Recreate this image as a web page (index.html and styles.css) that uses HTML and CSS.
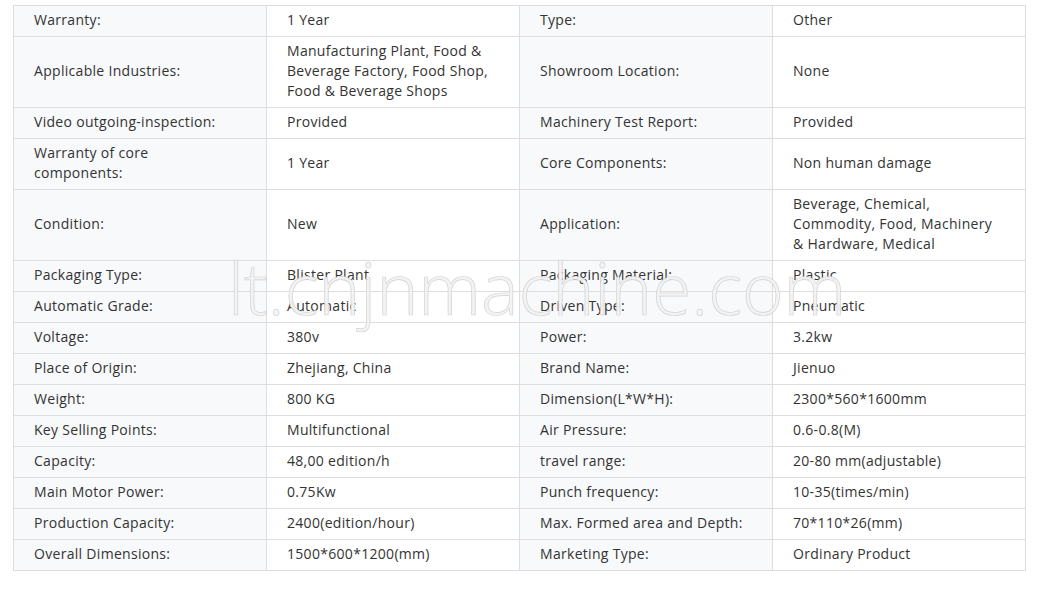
FILE: index.html
```html
<!DOCTYPE html>
<html>
<head>
<meta charset="utf-8">
<link rel="stylesheet" href="styles.css">
</head>
<body>
<div class="wrap">
<table class="spec">
<tbody>
<tr><td class="k">Warranty:</td><td class="v">1 Year</td><td class="k">Type:</td><td class="v">Other</td></tr>
<tr><td class="k">Applicable Industries:</td><td class="v">Manufacturing Plant, Food &amp; Beverage Factory, Food Shop, Food &amp; Beverage Shops</td><td class="k">Showroom Location:</td><td class="v">None</td></tr>
<tr><td class="k">Video outgoing-inspection:</td><td class="v">Provided</td><td class="k">Machinery Test Report:</td><td class="v">Provided</td></tr>
<tr><td class="k">Warranty of core<br>components:</td><td class="v">1 Year</td><td class="k">Core Components:</td><td class="v">Non human damage</td></tr>
<tr><td class="k">Condition:</td><td class="v">New</td><td class="k">Application:</td><td class="v">Beverage, Chemical, Commodity, Food, Machinery &amp; Hardware, Medical</td></tr>
<tr><td class="k">Packaging Type:</td><td class="v">Blister Plant</td><td class="k">Packaging Material:</td><td class="v">Plastic</td></tr>
<tr><td class="k">Automatic Grade:</td><td class="v">Automatic</td><td class="k">Driven Type:</td><td class="v">Pneumatic</td></tr>
<tr><td class="k">Voltage:</td><td class="v">380v</td><td class="k">Power:</td><td class="v">3.2kw</td></tr>
<tr><td class="k">Place of Origin:</td><td class="v">Zhejiang, China</td><td class="k">Brand Name:</td><td class="v">Jienuo</td></tr>
<tr><td class="k">Weight:</td><td class="v">800 KG</td><td class="k">Dimension(L*W*H):</td><td class="v">2300*560*1600mm</td></tr>
<tr><td class="k">Key Selling Points:</td><td class="v">Multifunctional</td><td class="k">Air Pressure:</td><td class="v">0.6-0.8(M)</td></tr>
<tr><td class="k">Capacity:</td><td class="v">48,00 edition/h</td><td class="k">travel range:</td><td class="v">20-80 mm(adjustable)</td></tr>
<tr><td class="k">Main Motor Power:</td><td class="v">0.75Kw</td><td class="k">Punch frequency:</td><td class="v">10-35(times/min)</td></tr>
<tr><td class="k">Production Capacity:</td><td class="v">2400(edition/hour)</td><td class="k">Max. Formed area and Depth:</td><td class="v">70*110*26(mm)</td></tr>
<tr><td class="k">Overall Dimensions:</td><td class="v">1500*600*1200(mm)</td><td class="k">Marketing Type:</td><td class="v">Ordinary Product</td></tr>
</tbody>
</table>
<div class="watermark">lt.cnjnmachine.com</div>
</div>
</body>
</html>
```

FILE: styles.css
```css
html, body {
  margin: 0;
  padding: 0;
  background: #ffffff;
}
.wrap {
  position: relative;
  padding: 5px 13px;
}
.spec {
  width: 1013px;
  border-collapse: collapse;
  table-layout: fixed;
  font-family: "Open Sans", "Noto Sans", sans-serif;
  font-size: 14px;
  line-height: 20px;
  letter-spacing: 0.3px;
  color: #333333;
}
.spec td {
  border: 1px solid #dddddd;
  padding: 4px 22px 6px 20px;
  vertical-align: middle;
  text-align: left;
}
.spec td.k {
  background: #f8f9fb;
}
.spec td.v {
  background: #ffffff;
}
.watermark {
  position: absolute;
  left: 228px;
  top: 243px;
  font-family: "Open Sans", "Liberation Sans", sans-serif;
  font-weight: 300;
  font-size: 71px;
  line-height: 90px;
  color: rgba(242, 242, 242, 0.95);
  -webkit-text-stroke: 0.7px rgba(205, 205, 205, 0.85);
  white-space: nowrap;
  pointer-events: none;
}
```
